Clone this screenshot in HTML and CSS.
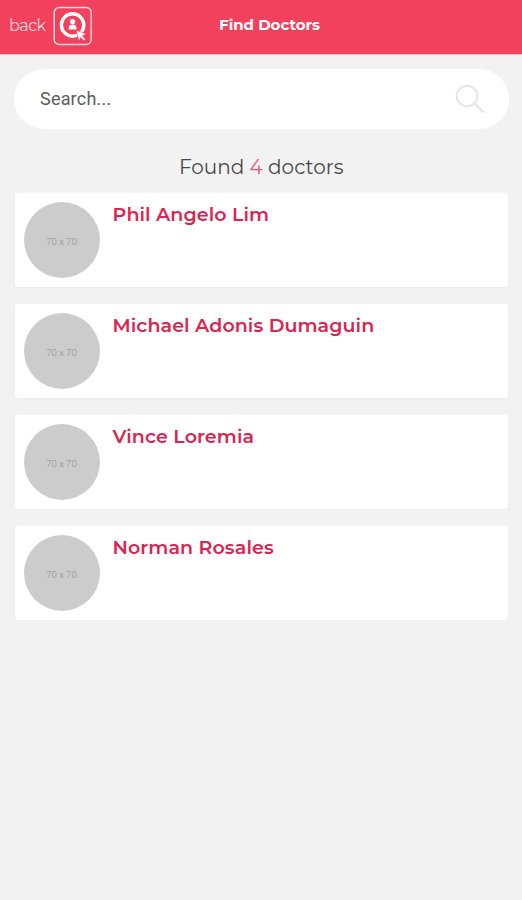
FILE: index.html
```html
<!DOCTYPE html>
<html lang="en">
<head>
<meta charset="utf-8">
<title>Find Doctors</title>
<link rel="stylesheet" href="styles.css">
</head>
<body>
<header class="topbar">
  <a class="back"><span class="back-label">back</span>
    <svg class="logo" viewBox="0 0 40 40" width="40" height="40" fill="none">
      <rect x="1.2" y="1.5" width="37" height="37" rx="5" stroke="#ffd9df" stroke-width="1.4"/>
      <circle cx="19.6" cy="19" r="11.2" stroke="#fff" stroke-width="3.4"/>
      <circle cx="19.6" cy="15.6" r="2.6" fill="#fff"/>
      <path d="M15.8 23.5v-1.8c0-2.2 1.4-3.3 3.8-3.3s3.8 1.1 3.8 3.3v1.8z" fill="#fff"/>
      <path d="M23.2 24.2l10 3.9-3.8 1.8 3.2 3.4-1.7 1.5-3.1-3.3-1.9 3.3z" fill="#fff" stroke="#f2415d" stroke-width=".6"/>
    </svg>
  </a>
  <h1 class="title">Find Doctors</h1>
</header>
<main class="content">
  <div class="search">
    <span class="search-text">Search...</span>
    <svg class="search-icon" viewBox="0 0 30 30" width="30" height="30" fill="none" stroke="#e6e6e6" stroke-width="2">
      <circle cx="12" cy="12" r="10.3"/><path d="M19.5 19.5L28.5 28.5" stroke-width="2.4"/>
    </svg>
  </div>
  <p class="found">Found <span class="count">4</span> doctors</p>
  <ul class="list">
    <li class="card"><span class="avatar">70 x 70</span><h2 class="name">Phil Angelo Lim</h2></li>
    <li class="card"><span class="avatar">70 x 70</span><h2 class="name">Michael Adonis Dumaguin</h2></li>
    <li class="card"><span class="avatar">70 x 70</span><h2 class="name">Vince Loremia</h2></li>
    <li class="card"><span class="avatar">70 x 70</span><h2 class="name">Norman Rosales</h2></li>
  </ul>
</main>
</body>
</html>
```
FILE: styles.css
```css
* { box-sizing: border-box; margin: 0; padding: 0; }
body { min-height: 900px; background: #f2f2f2; font-family: Montserrat, Inter, sans-serif; }
.topbar {
  display: grid; grid-template-columns: 1fr auto 1fr; align-items: center;
  height: 54px; padding: 0 0 3px 9px; background: #f2415d; color: #fff;
  box-shadow: 0 1px 1px #f9c6cf;
}
.back { display: flex; align-items: center; gap: 6px; }
.back-label { width: 38px; font-size: 16px; line-height: 20px; font-weight: 400; letter-spacing: -.5px; color: #ffd5dc; }
.logo { display: block; }
.title { padding: 0 0 1px 8px; font-size: 15px; line-height: 20px; font-weight: 700; white-space: nowrap; }
.content { padding: 15px 13.5px 15px 14px; }
.search {
  display: flex; align-items: center; justify-content: space-between;
  height: 60px; padding: 0 23.5px 0 26px; border-radius: 30px; background: #fff;
}
.search-text { padding-bottom: 2px; font-family: Roboto, sans-serif; font-size: 18px; color: #5c5c5c; letter-spacing: .2px; }
.search-icon { display: block; }
.found { margin-top: 25px; text-align: center; font-size: 20px; line-height: 26px; font-weight: 400; color: #484848; letter-spacing: 0; }
.count { color: #e9557a; }
.list { display: grid; gap: 15px; margin-top: 12px; list-style: none; }
.card {
  display: flex; align-items: flex-start; gap: 12.5px;
  height: 96px; padding: 9px; border-radius: 4px; background: #fff;
  border: 1px solid #eee; border-top-color: #f5f5f5;
}
.avatar {
  display: flex; align-items: center; justify-content: center; flex: none;
  width: 76px; height: 76px; padding: 3px 1px 0 0; border-radius: 50%;
  background: #ccc; color: #8c8c8c; font: 300 9.5px Roboto, sans-serif;
}
.name { padding-top: 1px; font-size: 19px; line-height: 24px; font-weight: 600; color: #db2450; letter-spacing: .1px; white-space: nowrap; }
```
